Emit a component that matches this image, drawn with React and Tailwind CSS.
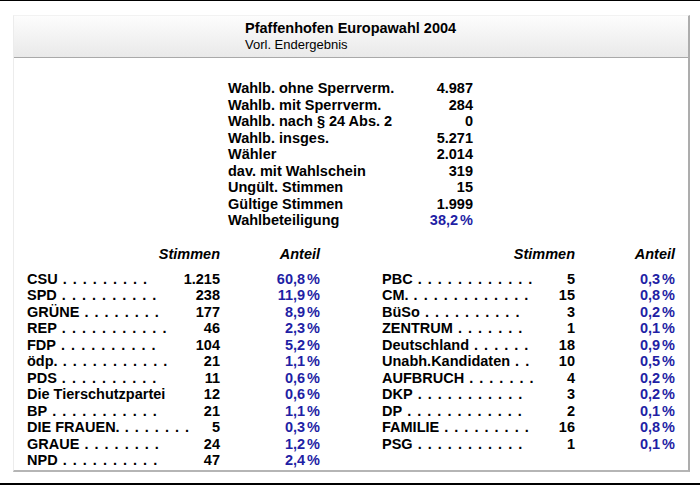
import React from 'react';

const stats = [
  ['Wahlb. ohne Sperrverm.', '4.987'],
  ['Wahlb. mit Sperrverm.', '284'],
  ['Wahlb. nach § 24 Abs. 2', '0'],
  ['Wahlb. insges.', '5.271'],
  ['Wähler', '2.014'],
  ['dav. mit Wahlschein', '319'],
  ['Ungült. Stimmen', '15'],
  ['Gültige Stimmen', '1.999'],
];

const left = [
  ['CSU', 9, '1.215', '60,8'],
  ['SPD', 10, '238', '11,9'],
  ['GRÜNE', 8, '177', '8,9'],
  ['REP', 11, '46', '2,3'],
  ['FDP', 10, '104', '5,2'],
  ['ödp.', 11, '21', '1,1'],
  ['PDS', 10, '11', '0,6'],
  ['Die Tierschutzpartei', 0, '12', '0,6'],
  ['BP', 11, '21', '1,1'],
  ['DIE FRAUEN.', 7, '5', '0,3'],
  ['GRAUE', 8, '24', '1,2'],
  ['NPD', 10, '47', '2,4'],
];

const right = [
  ['PBC', 12, '5', '0,3'],
  ['CM.', 12, '15', '0,8'],
  ['BüSo', 10, '3', '0,2'],
  ['ZENTRUM', 7, '1', '0,1'],
  ['Deutschland', 6, '18', '0,9'],
  ['Unabh.Kandidaten', 2, '10', '0,5'],
  ['AUFBRUCH', 7, '4', '0,2'],
  ['DKP', 11, '3', '0,2'],
  ['DP', 12, '2', '0,1'],
  ['FAMILIE', 9, '16', '0,8'],
  ['PSG', 11, '1', '0,1'],
];

function Pct({ value }) {
  return (
    <span className="text-[#1f1fa5]">
      {value}
      <span className="ml-[2px]">%</span>
    </span>
  );
}

function PartyTable({ rows }) {
  return (
    <div className="w-[293px]">
      <div className="grid grid-cols-[193px_100px] italic leading-[16.5px]">
        <div className="text-right">Stimmen</div>
        <div className="text-right">Anteil</div>
      </div>
      <div className="mt-[8px]">
        {rows.map(([name, dots, votes, pct]) => (
          <div key={name} className="grid grid-cols-[193px_100px] leading-[16.5px]">
            <div className="flex justify-between whitespace-pre">
              <span>
                {name}
                <span className="tracking-[1px]">{' .'.repeat(dots)}</span>
              </span>
              <span>{votes}</span>
            </div>
            <div className="text-right">
              <Pct value={pct} />
            </div>
          </div>
        ))}
      </div>
    </div>
  );
}

export default function App() {
  return (
    <div className="h-[485px] w-[700px] border-t border-b-2 border-black bg-white pt-[14px] font-['Liberation_Sans',Arial,sans-serif] text-black">
      <div className="ml-[13px] h-[457px] w-[677px] border-l border-t border-l-[#ececec] border-t-[#f2f2f2] border-r-2 border-r-[#adadad] border-b-2 border-b-[#b5b5b5] text-[14.5px] font-bold">
        <div className="h-[42px] border-b border-[#a9a9a9] bg-gradient-to-b from-[#fdfdfd] to-[#e9e9e9] pl-[231px] pt-[4px]">
          <div className="leading-[17px]">Pfaffenhofen Europawahl 2004</div>
          <div className="mt-[1px] text-[13px] font-normal leading-[14px]">Vorl. Endergebnis</div>
        </div>

        <div className="ml-[214px] mt-[22px] w-[245px] leading-[16.5px]">
          {stats.map(([label, value]) => (
            <div key={label} className="grid grid-cols-[181px_64px]">
              <div className="whitespace-nowrap">{label}</div>
              <div className="text-right">{value}</div>
            </div>
          ))}
          <div className="grid grid-cols-[181px_64px]">
            <div>Wahlbeteiligung</div>
            <div className="text-right">
              <Pct value="38,2" />
            </div>
          </div>
        </div>

        <div className="ml-[13px] mt-[17.5px] flex gap-[62px]">
          <PartyTable rows={left} />
          <PartyTable rows={right} />
        </div>
      </div>
    </div>
  );
}
